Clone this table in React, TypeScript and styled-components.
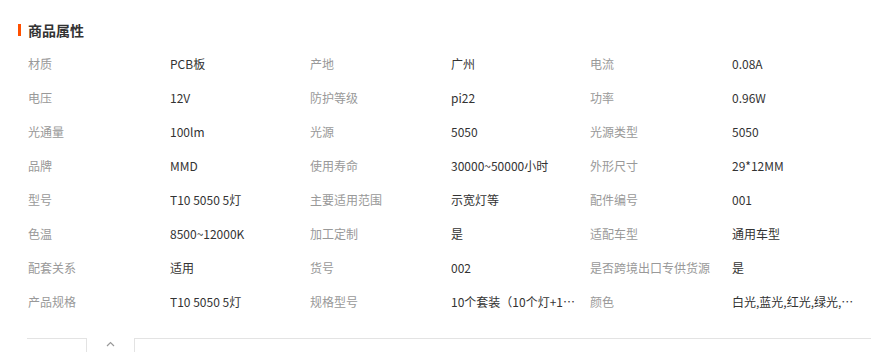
import React from "react"
import styled, { createGlobalStyle } from "styled-components"

const GlobalStyle = createGlobalStyle`
	body {
		margin: 0;
		background: #fff;
		font-family: "Noto Sans CJK SC", "Noto Sans", sans-serif;
	}
`

const Page = styled.div`
	width: 875px;
	height: 352px;
	overflow: hidden;
	background: #fff;
`

const Title = styled.div`
	display: flex;
	align-items: center;
	gap: 7px;
	margin: 20px 0 0 18px;
	height: 20px;
	font-size: 14px;
	font-weight: 700;
	color: #333;
	line-height: 20px;

	&::before {
		content: "";
		width: 3px;
		height: 12px;
		background: #ff5000;
	}
`

const Grid = styled.div`
	display: grid;
	grid-template-columns: 142px 140px 141px 139px 142px 140px;
	margin: 7px 0 0 28px;
`

const Cell = styled.div<{ $label?: boolean }>`
	height: 34px;
	line-height: 34px;
	font-size: 12px;
	color: ${(p) => (p.$label ? "#999" : "#333")};
	white-space: nowrap;
	overflow: hidden;
	text-overflow: ellipsis;
	padding-right: 12px;
`

const Footer = styled.div`
	display: flex;
	margin: 19px 4px 0 27px;
	height: 20px;
`

const Line = styled.div<{ $grow?: boolean }>`
	border-top: 1px solid #e3e3e3;
	width: ${(p) => (p.$grow ? "auto" : "59px")};
	flex: ${(p) => (p.$grow ? 1 : "none")};
`

const Tab = styled.div`
	width: 47px;
	border-left: 1px solid #e3e3e3;
	border-right: 1px solid #e3e3e3;
	display: flex;
	justify-content: center;
	padding-top: 3px;
	color: #999;
`

const rows: string[][] = [
	["材质", "PCB板", "产地", "广州", "电流", "0.08A"],
	["电压", "12V", "防护等级", "pi22", "功率", "0.96W"],
	["光通量", "100lm", "光源", "5050", "光源类型", "5050"],
	["品牌", "MMD", "使用寿命", "30000~50000小时", "外形尺寸", "29*12MM"],
	["型号", "T10 5050 5灯", "主要适用范围", "示宽灯等", "配件编号", "001"],
	["色温", "8500~12000K", "加工定制", "是", "适配车型", "通用车型"],
	["配套关系", "适用", "货号", "002", "是否跨境出口专供货源", "是"],
	["产品规格", "T10 5050 5灯", "规格型号", "10个套装（10个灯+10个卡座）", "颜色", "白光,蓝光,红光,绿光,黄光"],
]

export default function App() {
	return (
		<Page>
			<GlobalStyle />
			<Title>商品属性</Title>
			<Grid>
				{rows.map((row, i) =>
					row.map((text, j) => (
						<Cell key={`${i}-${j}`} $label={j % 2 === 0}>
							{text}
						</Cell>
					)),
				)}
			</Grid>
			<Footer>
				<Line />
				<Tab>
					<svg width="9" height="6" viewBox="0 0 9 6">
						<path d="M1 5L4.5 1.5L8 5" fill="none" stroke="currentColor" strokeWidth="1.2" />
					</svg>
				</Tab>
				<Line $grow />
			</Footer>
		</Page>
	)
}
